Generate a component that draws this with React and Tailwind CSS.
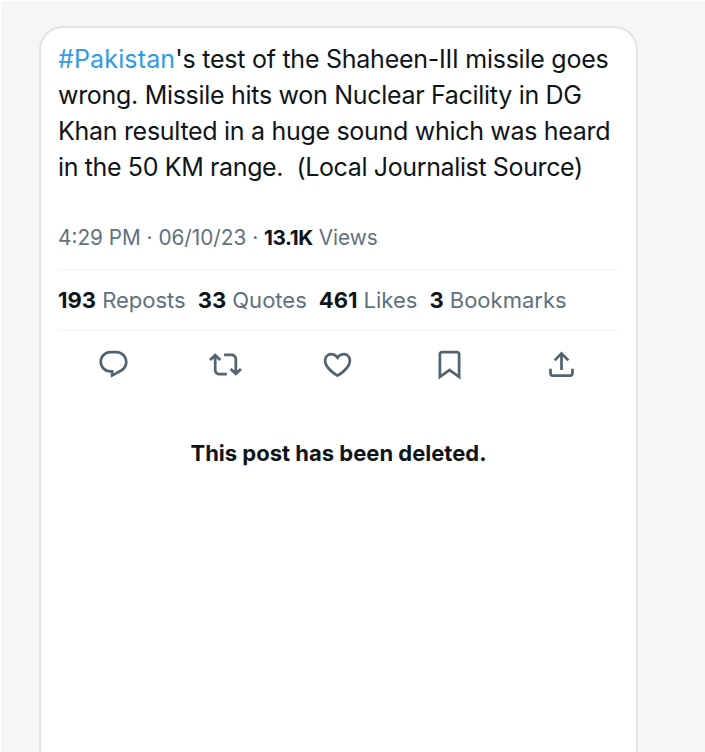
const icons = [
  "M1.751 10c0-4.42 3.584-8 8.005-8h4.366c4.49 0 8.129 3.64 8.129 8.13 0 2.96-1.607 5.68-4.196 7.11l-8.054 4.46v-3.69h-.067c-4.49.1-8.183-3.51-8.183-8.01zm8.005-6c-3.317 0-6.005 2.69-6.005 6 0 3.37 2.77 6.08 6.138 6.01l.351-.01h1.761v2.3l5.087-2.81c1.951-1.08 3.163-3.13 3.163-5.36 0-3.39-2.744-6.13-6.129-6.13H9.756z",
  "M4.5 3.88l4.432 4.14-1.364 1.46L5.5 7.55V16c0 1.1.896 2 2 2H13v2H7.5c-2.209 0-4-1.79-4-4V7.55L1.432 9.48.068 8.02 4.5 3.88zM16.5 6H11V4h5.5c2.209 0 4 1.79 4 4v8.45l2.068-1.93 1.364 1.46-4.432 4.14-4.432-4.14 1.364-1.46 2.068 1.93V8c0-1.1-.896-2-2-2z",
  "M16.697 5.5c-1.222-.06-2.679.51-3.89 2.16l-.805 1.09-.806-1.09C9.984 6.01 8.526 5.44 7.304 5.5c-1.243.07-2.349.78-2.91 1.91-.552 1.12-.633 2.78.479 4.82 1.074 1.97 3.257 4.27 7.129 6.61 3.87-2.34 6.052-4.64 7.126-6.61 1.111-2.04 1.03-3.7.477-4.82-.561-1.13-1.666-1.84-2.908-1.91zm4.187 7.69c-1.351 2.48-4.001 5.12-8.379 7.67l-.503.3-.504-.3c-4.379-2.55-7.029-5.19-8.382-7.67-1.36-2.5-1.41-4.86-.514-6.67.887-1.79 2.647-2.91 4.601-3.01 1.651-.09 3.368.56 4.798 2.01 1.429-1.45 3.146-2.1 4.796-2.01 1.954.1 3.714 1.22 4.601 3.01.896 1.81.846 4.17-.514 6.67z",
  "M4 4.5C4 3.12 5.119 2 6.5 2h11C18.881 2 20 3.12 20 4.5v18.44l-8-5.71-8 5.71V4.5zM6.5 4c-.276 0-.5.22-.5.5v14.56l6-4.29 6 4.29V4.5c0-.28-.224-.5-.5-.5h-11z",
  "M12 2.59l5.7 5.7-1.41 1.42L13 6.41V16h-2V6.41l-3.3 3.3-1.41-1.42L12 2.59zM21 15l-.02 3.51c0 1.38-1.12 2.49-2.5 2.49H5.5C4.11 21 3 19.88 3 18.5V15h2v3.5c0 .28.22.5.5.5h12.98c.28 0 .5-.22.5-.5L19 15h2z",
];

const stats = [
  ["193", "Reposts"],
  ["33", "Quotes"],
  ["461", "Likes"],
  ["3", "Bookmarks"],
];

export default function App() {
  return (
    <div className="h-[752px] overflow-hidden bg-[#f6f6f6] border-t border-l border-white pl-[38px] pt-[25px] font-['Inter',sans-serif]">
      <div className="h-[760px] w-[599px] rounded-t-[24px] border-2 border-[#dde4ea] bg-white pl-[17px] pr-[17px]">
        <p className="pt-[13px] text-[25px] leading-[36px] tracking-[-0.3px] text-[#0f1419]">
          <span className="tracking-[0.15px] text-[#2f9be6]">#Pakistan</span><span className="tracking-[-0.25px]">'s test of the Shaheen-III missile goes</span><br />
          wrong. Missile hits won Nuclear Facility in DG<br />
          Khan resulted in a huge sound which was heard<br />
          <span className="tracking-[-0.37px]">in the 50 KM range.&nbsp; (Local Journalist Source)</span>
        </p>
        <div className="mt-[26px] h-[59px] border-b border-[#eff3f4] pt-[12px] text-[20.75px] leading-[30px] text-[#5f7180]">
          4:29 PM · 06/10/23 · <span className="font-bold tracking-[-0.4px] text-[#0f1419]">13.1K</span> Views
        </div>
        <div className="flex h-[61px] items-center gap-3 border-b border-[#eff3f4] text-[22px]">
          {stats.map(([n, label]) => (
            <span key={label} className="text-[#5f7180]">
              <span className="font-bold text-[#0f1419]">{n}</span> {label}
            </span>
          ))}
        </div>
        <div className="flex w-[560px] justify-between pl-[39px] pr-[40px] pt-[17px]">
          {icons.map((d) => (
            <svg key={d} viewBox="0 0 24 24" className="h-[33px] w-[33px] fill-[#536471]">
              <path d={d} />
            </svg>
          ))}
        </div>
        <p className="mt-[57px] text-center text-[22px] font-bold leading-[30px] text-[#0f1419]">
          This post has been deleted.
        </p>
      </div>
    </div>
  );
}
